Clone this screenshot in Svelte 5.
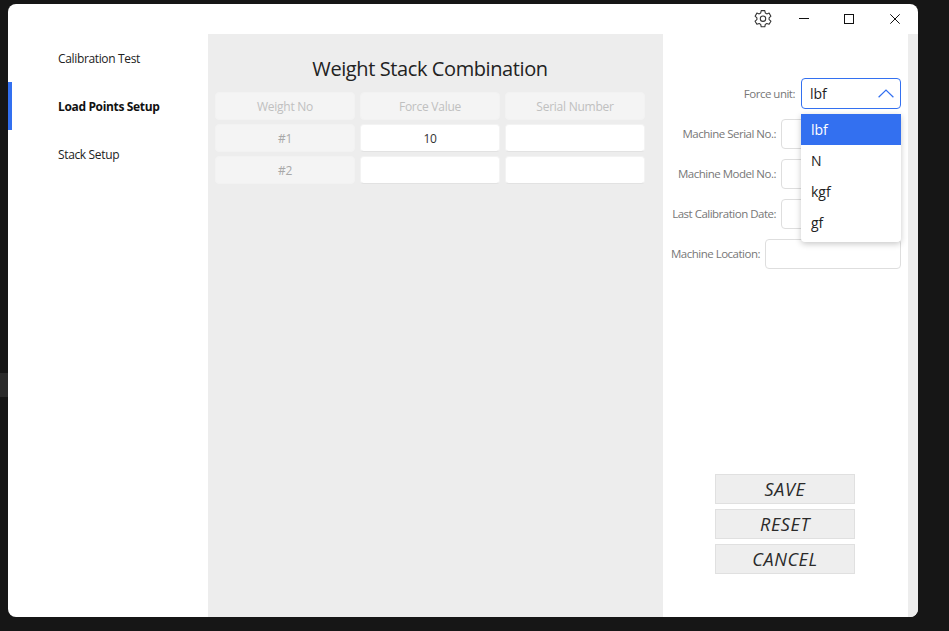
<script>
  let navItems = ["Calibration Test", "Load Points Setup", "Stack Setup"]
  let active = 1
  let units = ["lbf", "N", "kgf", "gf"]
  let unit = "lbf"
  let fields = [
    { label: "Machine Serial No.:", width: 120 },
    { label: "Machine Model No.:", width: 120 },
    { label: "Last Calibration Date:", width: 120 },
    { label: "Machine Location:", width: 136 }
  ]
  let rows = [
    { no: "#1", force: "10", serial: "" },
    { no: "#2", force: "", serial: "" }
  ]
</script>

<div class="desktop">
  <div class="edge"></div>
  <div class="window">
    <header class="titlebar">
      <svg class="gear" width="20" height="20" viewBox="0 0 20 20" fill="none" stroke="#333" stroke-width="1.1" stroke-linejoin="round">
        <path d="M8.2 1.6h3.6l.5 2.4 1.5.9 2.3-.8 1.8 3.1-1.8 1.6v1.8l1.8 1.6-1.8 3.1-2.3-.8-1.5.9-.5 2.4H8.2l-.5-2.4-1.5-.9-2.3.8-1.8-3.1 1.8-1.6V8.800l-1.8-1.6 1.8-3.100 2.3.8 1.500-.9z"/>
        <circle cx="10" cy="9.700" r="2.700"/>
      </svg>
      <svg class="ctl min" width="10" height="10" viewBox="0 0 10 10"><path d="M0 4.500h10" stroke="#111" fill="none"/></svg>
      <svg class="ctl max" width="10" height="10" viewBox="0 0 10 10"><rect x=".5" y=".5" width="9" height="9" stroke="#111" fill="none"/></svg>
      <svg class="ctl close" width="10" height="10" viewBox="0 0 10 10"><path d="M.3.300l9.400 9.400M9.700.300L.3 9.700" stroke="#111" fill="none"/></svg>
    </header>

    <div class="body">
      <nav class="sidebar">
        {#each navItems as item, i}
          <div class="nav-item" class:active={i == active}>{item}</div>
        {/each}
      </nav>

      <main class="center">
        <h1>Weight Stack Combination</h1>
        <div class="grid">
          <div class="cell head">Weight No</div>
          <div class="cell head">Force Value</div>
          <div class="cell head">Serial Number</div>
          {#each rows as row}
            <div class="cell no">{row.no}</div>
            <div class="cell val">{row.force}</div>
            <div class="cell val">{row.serial}</div>
          {/each}
        </div>
      </main>

      <aside class="side">
        <div class="form">
          <div class="row first">
            <span class="label">Force unit:</span>
            <div class="select">
              <span>{unit}</span>
              <svg width="16" height="9" viewBox="0 0 16 9"><path d="M.6 8.300L8 1l7.400 7.300" stroke="#3370f0" stroke-width="1.200" fill="none"/></svg>
              <ul class="menu">
                {#each units as u}
                  <li class:selected={u == unit}>{u}</li>
                {/each}
              </ul>
            </div>
          </div>
          {#each fields as f}
            <div class="row">
              <span class="label">{f.label}</span>
              <div class="input" style="width: {f.width}px"></div>
            </div>
          {/each}
        </div>

        <div class="buttons">
          <button>SAVE</button>
          <button>RESET</button>
          <button>CANCEL</button>
        </div>
      </aside>

      <div class="scrollbar"></div>
    </div>
  </div>
</div>

<style>
  :global(body) {
    margin: 0;
    background: #161616;
  }

  .desktop {
    position: relative;
    box-sizing: border-box;
    width: 949px;
    height: 631px;
    padding: 4px 31px 14px 8px;
    font-family: "Open Sans", "Noto Sans", sans-serif;
    color: #222;
  }

  .edge {
    position: absolute;
    left: 0;
    top: 373px;
    width: 8px;
    height: 24px;
    background: #2b2b2b;
  }

  .window {
    height: 100%;
    display: flex;
    flex-direction: column;
    background: #fff;
    border-radius: 8px;
    overflow: hidden;
  }

  .titlebar {
    height: 30px;
    flex: none;
    display: flex;
    align-items: center;
  }

  .gear { margin-left: 745px; }
  .ctl { display: block; }
  .min { margin-left: 26px; }
  .max { margin-left: 35px; }
  .close { margin-left: 36px; }

  .body {
    flex: 1;
    display: flex;
    min-height: 0;
  }

  .sidebar {
    width: 200px;
    flex: none;
  }

  .nav-item {
    height: 48px;
    line-height: 50px;
    padding-left: 50px;
    font-size: 12px;
    letter-spacing: -0.35px;
    color: #222;
  }

  .nav-item.active {
    font-weight: 700;
    color: #111;
    border-left: 4px solid #3370f0;
    padding-left: 46px;
  }

  .center {
    width: 455px;
    flex: none;
    background: #ededed;
    box-sizing: border-box;
    padding: 0 18px 0 7px;
  }

  h1 {
    margin: 0;
    height: 58px;
    box-sizing: border-box;
    padding-top: 22px;
    width: 430px;
    line-height: 26px;
    font-size: 20px;
    font-weight: 400;
    letter-spacing: -0.4px;
    text-align: center;
    color: #222;
  }

  .grid {
    display: grid;
    grid-template-columns: repeat(3, 140px);
    grid-auto-rows: 28px;
    gap: 4px 5px;
  }

  .cell {
    display: flex;
    align-items: center;
    justify-content: center;
    font-size: 12px;
    letter-spacing: -0.25px;
    border-radius: 4px;
    box-sizing: border-box;
  }

  .head, .no {
    background: #f4f4f4;
    border: 1px solid #f2f2f2;
    color: #c0c0c0;
  }

  .no { color: #a8a8a8; }

  .val {
    background: #fff;
    border: 1px solid #f3f3f3;
    border-bottom-color: #e2e2e2;
    color: #333;
  }

  .side {
    width: 245px;
    flex: none;
    display: flex;
    flex-direction: column;
    box-sizing: border-box;
    padding: 44px 7px 43px 0;
  }

  .form {
    display: flex;
    flex-direction: column;
    gap: 10px;
  }

  .row {
    display: flex;
    justify-content: flex-end;
    align-items: center;
    gap: 5px;
    height: 30px;
  }

  .row.first { height: 31px; }

  .label {
    font-size: 11.500px;
    letter-spacing: -0.5px;
    color: #777;
    white-space: nowrap;
    padding-bottom: 2px;
  }

  .first .label { padding-bottom: 0; padding-right: 1px; }

  .input {
    height: 30px;
    box-sizing: border-box;
    border: 1px solid #dedede;
    border-radius: 4px;
    background: #fff;
  }

  .select {
    position: relative;
    width: 100px;
    height: 31px;
    box-sizing: border-box;
    border: 1px solid #3370f0;
    border-radius: 4px;
    display: flex;
    align-items: center;
    justify-content: space-between;
    padding: 0 6px 0 8px;
    font-size: 14px;
    color: #222;
  }

  .menu {
    position: absolute;
    left: -1px;
    top: 35px;
    width: 100px;
    margin: 0;
    padding: 0 0 4px;
    list-style: none;
    background: #fff;
    border-radius: 0 0 4px 4px;
    box-shadow: 0 2px 6px rgba(0, 0, 0, 0.22);
    z-index: 2;
  }

  .menu li {
    height: 31px;
    line-height: 31px;
    padding-left: 10px;
    font-size: 14px;
  }

  .menu li.selected {
    background: #3370f0;
    color: #fff;
  }

  .buttons {
    margin-top: auto;
    margin-left: 52px;
    width: 140px;
    display: flex;
    flex-direction: column;
    gap: 5px;
  }

  button {
    width: 140px;
    height: 30px;
    padding: 0;
    background: #eeeeee;
    border: 1px solid #e0e0e0;
    font-family: inherit;
    font-size: 18px;
    font-weight: 400;
    font-style: italic;
    letter-spacing: 0.6px;
    color: #2a2a2a;
  }

  .scrollbar {
    width: 10px;
    flex: none;
    background: #ededed;
  }
</style>
